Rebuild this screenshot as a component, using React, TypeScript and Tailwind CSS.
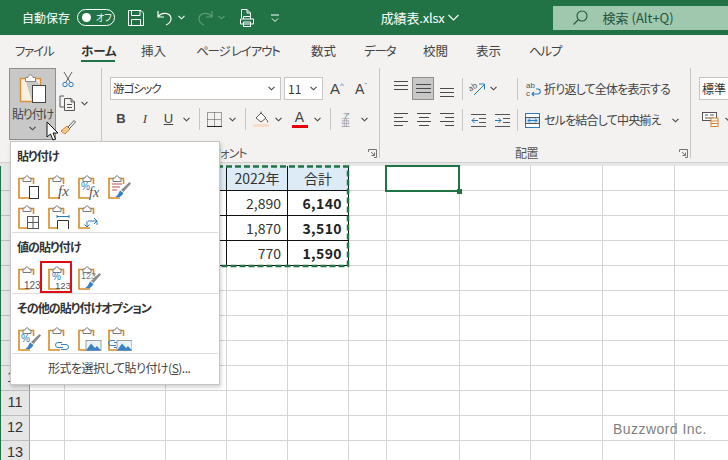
import React from "react";

const Chev = ({ c = "#444" }: { c?: string }) => (
  <svg width="7" height="5" viewBox="0 0 7 5" className="shrink-0"><path d="M0.5 0.8 L3.5 3.8 L6.5 0.8" fill="none" stroke={c} strokeWidth="1.1" /></svg>
);
const Sep = () => <div className="w-px h-[22px] bg-[#c8c6c4] shrink-0" />;
const Launcher = () => (
  <svg width="9" height="9" viewBox="0 0 9 9" className="shrink-0"><path d="M0.5 3 V0.5 H8.5 V8.5 H6 M3 3 L6.5 6.5 M6.5 3.5 V6.5 H3.5" fill="none" stroke="#666" strokeWidth="0.9" /></svg>
);
const HL = ({ ys, xs }: { ys: number[]; xs: [number, number][] }) => (
  <svg width="15" height="16" viewBox="0 0 15 16">
    {ys.map((y, i) => (
      <path key={i} d={`M${xs[i][0]} ${y}.5 H${xs[i][1]}`} stroke="#4a4a4a" strokeWidth="1" />
    ))}
  </svg>
);

/* paste menu clipboard base */
const PI = ({ children }: { children?: React.ReactNode }) => (
  <svg width="24" height="25" viewBox="0 0 24 25" className="shrink-0">
    <path d="M5 3.5 H1 V23 H12 M13 3.5 H15.5 V9" fill="none" stroke="#d58d26" strokeWidth="1.6" />
    <path d="M5 6.5 V3 H7 C7.3 0.2 10.7 0.2 11 3 H13 V6.5 Z" fill="#fff" stroke="#7a7a7a" strokeWidth="1" />
    {children}
  </svg>
);
const Doc = () => <rect x="11.5" y="11.5" width="9" height="12" fill="#fff" stroke="#333" strokeWidth="1" />;
const Brush = () => (
  <g>
    <path d="M13 15 L21.5 7 L23 8.5 L15.5 17 Z" fill="#8a8a8a" />
    <path d="M7 21.5 C10 21 10.5 18 12 15.5 L15.5 18 C14 21 11 23.5 7 21.5 Z" fill="#3a82c4" />
  </g>
);
const BT = ({ x, y, s, c, t, it, f }: { x: number; y: number; s: number; c: string; t: string; it?: boolean; f?: string }) => (
  <text x={x} y={y} fontSize={s} fill={c} fontStyle={it ? "italic" : "normal"} fontFamily={f || "'Liberation Sans',sans-serif"}>{t}</text>
);
const Pic = ({ x }: { x: number }) => (
  <g>
    <rect x={x} y="13.5" width="15" height="10" fill="#eaf3fa" stroke="#888" strokeWidth="0.8" />
    <path d={`M${x} 23.5 L${x + 5} 16.5 L${x + 9} 21 L${x + 11} 19 L${x + 15} 23.5 Z`} fill="#3a82c4" />
  </g>
);
const Link = ({ x = 9, y = 15 }: { x?: number; y?: number }) => (
  <g fill="none" stroke="#3a82c4" strokeWidth="1">
    <path d={`M${x + 8} ${y + 1.5} H${x + 4} a2.5 2.5 0 0 0 0 5 H${x + 9}`} />
    <path d={`M${x + 7} ${y + 3.5} H${x + 12} a2.5 2.5 0 0 1 0 5 H${x + 7}`} />
  </g>
);

const MenuHead = ({ children, cls }: { children: React.ReactNode; cls: string }) => (
  <div className={`pl-[6px] font-bold text-[12px] tracking-[-0.9px] leading-[16px] text-[#333] ${cls}`}>{children}</div>
);
const MenuSep = ({ cls }: { cls: string }) => <div className={`mx-px h-px bg-[#dcdcdc] ${cls}`} />;

const cols = [0, 1, 2, 3, 4, 5, 6, 7, 8, 9, 10, 11];
const rows = [2, 3, 4, 5, 6, 7, 8, 9, 10, 11, 12, 13];
const table: Record<string, [string, boolean]> = {
  "2-4": ["2022年", false], "2-5": ["合計", false],
  "3-4": ["2,890", false], "3-5": ["6,140", true],
  "4-4": ["1,870", false], "4-5": ["3,510", true],
  "5-4": ["770", false], "5-5": ["1,590", true],
};

export default function App() {
  return (
    <div className="relative w-[728px] h-[460px] overflow-hidden bg-white text-[#444] font-['Noto_Sans_CJK_JP',sans-serif] [font-feature-settings:'palt'] text-[12px]">
      {/* Title bar */}
      <div className="h-[35px] bg-[#217346] flex items-center text-white">
        <span className="ml-[22px] w-[55px] text-[12px] whitespace-nowrap">自動保存</span>
        <div className="w-[38px] h-[17px] rounded-full border border-white flex items-center pl-[4px] shrink-0">
          <span className="w-[9px] h-[9px] rounded-full bg-white" />
          <span className="ml-[5px] text-[9px] leading-none">オフ</span>
        </div>
        <svg className="ml-[13px] shrink-0" width="16" height="16" viewBox="0 0 16 16" fill="none" stroke="#fff" strokeWidth="1"><path d="M0.5 0.5 H13 L15.5 3 V15.5 H0.5 Z M3.5 0.5 V5.5 H12 V0.5 M3.5 15.5 V9.5 H12.5 V15.5" /></svg>
        <svg className="ml-[13px] shrink-0" width="16" height="16" viewBox="0 0 16 16" fill="none" stroke="#fff" strokeWidth="1.2"><path d="M1 1 V7 H7 M1 7 C4 2 13 2 14 8 C14.5 11 12 14 9 15" /></svg>
        <span className="ml-[5px] flex"><Chev c="#fff" /></span>
        <svg className="ml-[12px] shrink-0" width="16" height="16" viewBox="0 0 16 16" fill="none" stroke="#5f9d7c" strokeWidth="1.2"><path d="M15 1 V7 H9 M15 7 C12 2 3 2 2 8 C1.5 11 4 14 7 15" /></svg>
        <span className="ml-[5px] flex"><Chev c="#5f9d7c" /></span>
        <svg className="ml-[14px] shrink-0" width="16" height="18" viewBox="0 0 16 18" fill="none" stroke="#fff" strokeWidth="1"><path d="M2.5 9 V0.5 H8 L11.5 4 V7 M8 0.5 V4 H11.5 M4.5 10 V7.5 H11.5 V10 M1.5 10 H14.5 V15 H1.5 Z M4.5 13 H11.5 V17.5 H4.5 Z" /></svg>
        <svg className="ml-[16px] shrink-0" width="8" height="8" viewBox="0 0 8 8" fill="none" stroke="#fff" strokeWidth="1"><path d="M0 1 H8 M1 4.5 L4 7.5 L7 4.5" /></svg>
        <span className="ml-[102px] w-[67px] text-[13px] tracking-[-0.2px] whitespace-nowrap">成績表.xlsx</span>
        <svg className="shrink-0" width="11" height="7" viewBox="0 0 11 7" fill="none" stroke="#fff" strokeWidth="1.1"><path d="M0.5 1 L5.5 6 L10.5 1" /></svg>
        <div className="ml-[94px] w-[176px] h-[24px] bg-[#a0c8ae] flex items-center text-[#24543c]">
          <svg className="ml-[20px] shrink-0" width="15" height="15" viewBox="0 0 15 15" fill="none" stroke="#24543c" strokeWidth="1.1"><circle cx="9" cy="6" r="5" /><path d="M5.5 9.5 L0.5 14.5" /></svg>
          <span className="ml-[15px] text-[13px] whitespace-nowrap">検索 (Alt+Q)</span>
        </div>
      </div>

      {/* Tabs */}
      <div className="h-[30px] bg-[#f3f2f1] flex pl-[15px] pt-[6px] text-[12.5px] text-[#444] leading-[20px]">
        <span className="w-[66px] tracking-[-1.2px]">ファイル</span>
        <span className="w-[60px] relative font-bold text-[#333]">
          ホーム
          <span className="absolute left-0 top-[19px] w-[34px] h-[2px] bg-[#217346]" />
        </span>
        <span className="w-[55px]">挿入</span>
        <span className="w-[115px] whitespace-nowrap tracking-[-1.2px]">ページ レイアウト</span>
        <span className="w-[53px]">数式</span>
        <span className="w-[59px] tracking-[-1.2px]">データ</span>
        <span className="w-[53px]">校閲</span>
        <span className="w-[53px]">表示</span>
        <span className="tracking-[-1.2px]">ヘルプ</span>
      </div>

      {/* Ribbon */}
      <div className="h-[98px] bg-[#f3f2f1] flex pt-[3px] border-b border-[#d2d0ce]">
        {/* Clipboard */}
        <div className="w-[102px] h-[90px] border-r border-[#c8c6c4] pl-[9px] flex shrink-0">
          <div className="w-[47px] h-[72px] bg-[#c8c8c8] border border-[#8f8f8f] flex flex-col items-center shrink-0">
            <svg className="mt-[4px]" width="28" height="31" viewBox="0 0 28 31">
              <path d="M6 5.5 H1.5 V28.5 H13 M16 5.5 H21.5 V13" fill="#fbeedb" stroke="#d8953c" strokeWidth="1.5" />
              <path d="M6.5 8.5 V4.5 H9 C9.3 1 13.7 1 14 4.5 H16.5 V8.5 Z" fill="#fff" stroke="#8a8a8a" strokeWidth="1" />
              <rect x="13.5" y="12.5" width="13" height="17" fill="#fff" stroke="#444" strokeWidth="1" />
            </svg>
            <span className="mt-[2px] text-[12px] leading-[16px] whitespace-nowrap tracking-[-1.2px] text-[#444]">貼り付け</span>
            <span className="mt-[4px] flex"><Chev /></span>
          </div>
          <div className="ml-[3px] flex flex-col shrink-0 pt-[3px]">
            <svg width="12" height="17" viewBox="0 0 12 17" className="ml-[3px]" fill="none" strokeWidth="1"><path d="M2 1 L8 11 M10 1 L4 11" stroke="#666" /><circle cx="3" cy="13.5" r="2.2" stroke="#2a7cc0" /><circle cx="9" cy="13.5" r="2.2" stroke="#2a7cc0" /></svg>
            <div className="flex items-center mt-[7px]">
              <svg width="17" height="16" viewBox="0 0 17 16" fill="none" stroke="#555" strokeWidth="1"><path d="M5 1 H1 V12 H5" /><path d="M5.5 3.5 H12 L15.5 7 V15.5 H5.5 Z M12 3.5 V7 H15.5 M8 9.5 H13 M8 12.5 H13" /></svg>
              <span className="ml-[5px] flex"><Chev /></span>
            </div>
            <svg className="mt-[8px] ml-px" width="16" height="16" viewBox="0 0 16 16"><path d="M1 12 L7 7 L10 10 L5 15 Z" fill="#f6c88c" stroke="#d8822c" strokeWidth="1" /><path d="M8 8 L14 1.5 L15.5 3 L9.5 9.5 Z" fill="#fff" stroke="#555" strokeWidth="1" /></svg>
          </div>
        </div>

        {/* Font */}
        <div className="w-[278px] h-[90px] border-r border-[#c8c6c4] flex flex-col shrink-0 pt-[9px]">
          <div className="flex items-center h-[23px]">
            <div className="ml-[8px] w-[171px] h-[23px] bg-white border border-[#c6c6c6] flex items-center pl-[2px] pr-[5px] justify-between shrink-0 text-[11.5px] tracking-[-0.9px] text-[#333]">
              <span>游ゴシック</span><Chev />
            </div>
            <div className="ml-[3px] w-[39px] h-[23px] bg-white border border-[#c6c6c6] flex items-center pl-[3px] pr-[5px] justify-between shrink-0 text-[12px] text-[#333]">
              <span>11</span><Chev />
            </div>
            <span className="ml-[7px] w-[25px] text-[15px] leading-none whitespace-nowrap text-[#444] font-['Liberation_Sans',sans-serif]">A<span className="text-[8px] align-[6px] text-[#2a7cc0]">^</span></span>
            <span className="w-[20px] text-[14px] leading-none whitespace-nowrap text-[#444] font-['Liberation_Sans',sans-serif]">A<span className="text-[8px] align-[6px] text-[#2a7cc0]">ˇ</span></span>
          </div>
          <div className="flex items-center h-[23px] mt-[8px]">
            <span className="ml-[7px] w-[24px] text-center font-bold text-[13px] text-[#444] font-['Liberation_Sans',sans-serif]">B</span>
            <span className="w-[24px] text-center italic text-[13px] text-[#444] font-['Liberation_Serif',serif]">I</span>
            <span className="w-[23px] text-center underline text-[13px] text-[#444] font-['Liberation_Sans',sans-serif]">U</span>
            <span className="w-[13px] flex justify-center"><Chev /></span>
            <span className="ml-[6px] flex"><Sep /></span>
            <span className="w-[29px] flex justify-center">
              <svg width="15" height="15" viewBox="0 0 15 15" fill="none"><path d="M0.5 0.5 H14.5 V14.5 H0.5 Z M7.5 0.5 V14.5 M0.5 7.5 H14.5" stroke="#444" strokeWidth="1" strokeDasharray="1 1" /><path d="M0 14.5 H15" stroke="#222" strokeWidth="1" /></svg>
            </span>
            <span className="w-[6px] flex justify-center"><Chev /></span>
            <span className="ml-[10px] flex"><Sep /></span>
            <span className="w-[29px] flex justify-center">
              <svg width="16" height="16" viewBox="0 0 16 16"><path d="M3 7 L8 2 L13 7 L8 11 Z" fill="#fff" stroke="#555" strokeWidth="1" /><path d="M8 2 L8 0.5 M13 8 C15 10 15 11 14 11.5" stroke="#555" fill="none" /><rect x="0" y="13" width="16" height="3" fill="#f8ddc8" /></svg>
            </span>
            <span className="w-[6px] flex justify-center"><Chev /></span>
            <span className="ml-[4px] w-[29px] flex flex-col items-center">
              <span className="text-[14px] leading-[13px] text-[#444] font-['Liberation_Sans',sans-serif]">A</span>
              <span className="w-[16px] h-[3px] mt-px bg-[#e8000b]" />
            </span>
            <span className="w-[6px] flex justify-center"><Chev /></span>
            <span className="ml-[10px] flex"><Sep /></span>
            <span className="w-[30px] flex justify-center">
              <svg width="11" height="16" viewBox="0 0 11 16"><text x="2" y="6.5" fontSize="7" fill="#777">ア</text><text x="0" y="15" fontSize="9" fill="#999">亜</text></svg>
            </span>
            <span className="w-[6px] flex justify-center"><Chev /></span>
          </div>
          <div className="mt-[15px] h-[16px] flex items-center pl-[109px] pr-[2px] justify-between text-[12px] tracking-[-0.9px] text-[#555]">
            <span>フォント</span>
            <Launcher />
          </div>
        </div>

        {/* Alignment */}
        <div className="w-[311px] h-[90px] border-r border-[#c8c6c4] flex flex-col shrink-0 pt-[9px]">
          <div className="flex items-center h-[23px]">
            <span className="ml-[8px] w-[24px] flex justify-center"><HL ys={[0, 4, 8]} xs={[[1, 15], [1, 15], [1, 15]]} /></span>
            <span className="w-[22px] h-[23px] bg-[#c8c8c8] border border-[#8f8f8f] flex items-center justify-center"><HL ys={[3, 7, 11]} xs={[[0, 15], [0, 15], [0, 15]]} /></span>
            <span className="w-[26px] flex justify-center"><HL ys={[7, 11, 15]} xs={[[0, 14], [0, 14], [0, 14]]} /></span>
            <span className="ml-[2px] flex"><Sep /></span>
            <span className="ml-[5px] w-[20px] flex justify-center">
              <svg width="18" height="16" viewBox="0 0 18 16" fill="none" stroke="#666" strokeWidth="1"><text x="0" y="9" fontSize="8" fill="#555" stroke="none" transform="rotate(-35 4 8)">ab</text><path d="M5 14 L15 4 M10 3 H15.5 V8.5" stroke="#2a7cc0" /></svg>
            </span>
            <span className="w-[10px] flex justify-center"><Chev /></span>
            <span className="ml-[19px] flex"><Sep /></span>
            <svg className="ml-[8px] shrink-0" width="16" height="16" viewBox="0 0 16 16" fill="none"><text x="0" y="7" fontSize="8" fill="#555" stroke="none" fontFamily="'Liberation Sans',sans-serif">ab</text><text x="0" y="15" fontSize="8" fill="#555" stroke="none" fontFamily="'Liberation Sans',sans-serif">c</text><path d="M6 13 H12 C15 13 15 8 12 8 H10 M8 11 L6 13 L8 15" stroke="#2a7cc0" strokeWidth="1.1" /></svg>
            <span className="ml-[2px] pt-[1px] text-[12px] tracking-[-0.8px] whitespace-nowrap text-[#444]">折り返して全体を表示する</span>
          </div>
          <div className="flex items-center h-[23px] mt-[9px]">
            <span className="ml-[8px] w-[24px] flex justify-center"><HL ys={[1, 5, 9, 13]} xs={[[1, 15], [1, 10], [1, 15], [1, 10]]} /></span>
            <span className="w-[22px] flex justify-center"><HL ys={[1, 5, 9, 13]} xs={[[1, 15], [3, 13], [1, 15], [3, 13]]} /></span>
            <span className="w-[26px] flex justify-center"><HL ys={[1, 5, 9, 13]} xs={[[0, 14], [5, 14], [0, 14], [5, 14]]} /></span>
            <span className="ml-[2px] flex"><Sep /></span>
            <span className="w-[30px] flex justify-center">
              <svg width="15" height="14" viewBox="0 0 15 14" fill="none" strokeWidth="1"><path d="M0 1.5 H15 M8 5.5 H15 M8 9.5 H15 M0 13.5 H15" stroke="#555" /><path d="M7 7.5 H1 M3.5 5 L1 7.5 L3.5 10" stroke="#2a7cc0" /></svg>
            </span>
            <span className="w-[18px] flex justify-center">
              <svg width="15" height="14" viewBox="0 0 15 14" fill="none" strokeWidth="1"><path d="M0 1.5 H15 M8 5.5 H15 M8 9.5 H15 M0 13.5 H15" stroke="#555" /><path d="M0 7.5 H6 M3.5 5 L6 7.5 L3.5 10" stroke="#2a7cc0" /></svg>
            </span>
            <span className="ml-[6px] flex"><Sep /></span>
            <svg className="ml-[7px] shrink-0" width="15" height="15" viewBox="0 0 15 15" fill="none"><rect x="0.5" y="0.5" width="14" height="14" fill="#fff" stroke="#2a7cc0" /><rect x="0.5" y="4.5" width="14" height="6" fill="#cfe4f5" stroke="#555" /><path d="M3 7.5 H12 M5 5.5 L3 7.5 L5 9.5 M10 5.5 L12 7.5 L10 9.5" stroke="#2a7cc0" /></svg>
            <span className="ml-[4px] w-[126px] text-[12px] tracking-[-0.8px] whitespace-nowrap text-[#444]">セルを結合して中央揃え</span>
            <span className="ml-[2px] flex"><Chev /></span>
          </div>
          <div className="mt-[14px] h-[16px] flex items-center pr-[2px] text-[12px] tracking-[-0.5px] text-[#555]">
            <span className="ml-[135px]">配置</span>
            <span className="ml-auto flex"><Launcher /></span>
          </div>
        </div>

        {/* Number */}
        <div className="flex flex-col shrink-0 pt-[9px]">
          <div className="flex items-center h-[23px]">
            <div className="ml-[8px] w-[60px] h-[23px] bg-white border border-[#c6c6c6] flex items-center pl-[2px] text-[12px] text-[#333]">標準</div>
          </div>
          <div className="flex items-center h-[23px] mt-[8px]">
            <svg className="ml-[11px] shrink-0" width="17" height="15" viewBox="0 0 17 15"><rect x="0.5" y="0.5" width="14" height="8" fill="#fff" stroke="#555" /><path d="M3 3 H6 M8 3 H12 M3 6 H12" stroke="#555" /><rect x="9" y="6" width="7" height="8.5" fill="#fff" stroke="#d8822c" /><path d="M9 9 H16 M9 11.5 H16" stroke="#d8822c" /></svg>
            <span className="ml-[6px] flex"><Chev /></span>
          </div>
        </div>
      </div>

      {/* Sheet */}
      <div className="h-[3px] bg-[#e6e6e6]" />
      <div className="border-l border-[#217346] grid grid-cols-[29px_35px_101px_61px_61px_61px_38px_73px_71px_72px_72px_54px] auto-rows-[25px] text-[#333]">
        {rows.map((r) =>
          cols.map((c) => {
            if (c === 0)
              return (
                <div key={`${r}-${c}`} className="bg-[#e6e6e6] border-r border-b border-r-[#9b9b9b] border-b-[#bdbdbd] flex items-center justify-center text-[14.5px] text-[#333] font-['Liberation_Sans',sans-serif]">{r}</div>
              );
            const cell = table[`${r}-${c}`];
            const inTable = r <= 5 && (c === 3 || c === 4 || c === 5);
            const head = r === 2 && inTable;
            return (
              <div
                key={`${r}-${c}`}
                className={`border-r border-b flex items-center px-[6px] text-[14px] ${inTable ? "border-r-[#111] border-b-[#111]" : "border-r-[#d4d4d4] border-b-[#d4d4d4]"} ${head ? "bg-[#ddebf7] justify-center" : "justify-end"} ${cell && cell[1] ? "font-bold text-[#222] tracking-[0.4px]" : ""}`}
              >
                {cell ? cell[0] : ""}
              </div>
            );
          })
        )}
      </div>

      {/* Marching ants */}
      <svg className="absolute left-0 top-[160px]" width="355" height="112" viewBox="0 0 355 112" fill="none">
        <path d="M100 6.5 H348 V106 H100" stroke="#217346" strokeWidth="2.5" strokeDasharray="6 3" />
      </svg>

      {/* Selected cell */}
      <div className="absolute left-[385px] top-[165px] w-[75px] h-[27px] border-2 border-[#217346]">
        <span className="absolute right-[-4px] bottom-[-4px] w-[5px] h-[5px] bg-[#217346]" />
      </div>

      {/* Paste menu */}
      <div className="absolute left-[10px] top-[141px] w-[210px] h-[244px] bg-white border border-[#c6c6c6] shadow-[1px_2px_4px_rgba(0,0,0,0.2)]">
        <MenuHead cls="mt-[6px]">貼り付け</MenuHead>
        <div className="flex gap-[6px] pl-[7px] mt-[11px]">
          <PI><Doc /></PI>
          <PI><BT x={10} y={21} s={15} c="#555" t="fx" it f="'Liberation Serif',serif" /></PI>
          <PI><BT x={3} y={15} s={10} c="#2a7cc0" t="%" /><BT x={11} y={22} s={14} c="#555" t="fx" it f="'Liberation Serif',serif" /></PI>
          <PI>
            <path d="M4 9 H14 M4 12 H12 M4 15 H9" stroke="#c0504d" strokeWidth="1" />
            <Brush />
          </PI>
        </div>
        <div className="flex gap-[6px] pl-[7px] mt-[5px]">
          <PI><rect x="9.5" y="11.5" width="11" height="12" fill="#fff" stroke="#555" /><path d="M15 11.5 V23.5 M9.5 17.5 H20.5" stroke="#555" /></PI>
          <PI><path d="M9 11.5 H21 M9 10 V13 M21 10 V13" stroke="#2a7cc0" fill="none" /><path d="M9.5 24 V15.5 H20.5 V24" fill="#fff" stroke="#333" /></PI>
          <PI><path d="M10 16 H19 V20 M16 13 L19 16 L16 19 M9 16 V22 M6.5 19.5 L9 22 L11.5 19.5" fill="none" stroke="#2a7cc0" /></PI>
        </div>
        <MenuSep cls="mt-[2px]" />
        <MenuHead cls="mt-[6px]">値の貼り付け</MenuHead>
        <div className="flex gap-[6px] pl-[7px] mt-[11px]">
          <PI><BT x={6} y={23} s={10} c="#555" t="123" /></PI>
          <div className="relative flex">
            <PI><BT x={4} y={14} s={10} c="#2a7cc0" t="%" /><BT x={7} y={23} s={9.5} c="#555" t="123" /></PI>
            <span className="absolute left-[-8px] top-[-5px] w-[32px] h-[32px] border-2 border-[#e00b14]" />
          </div>
          <PI><BT x={3} y={13} s={9} c="#777" t="123" /><Brush /></PI>
        </div>
        <MenuSep cls="mt-[2px]" />
        <MenuHead cls="mt-[6px]">その他の貼り付けオプション</MenuHead>
        <div className="flex gap-[6px] pl-[7px] mt-[11px]">
          <PI><BT x={3} y={15} s={10} c="#2a7cc0" t="%" /><Brush /></PI>
          <PI><Link x={6} y={14} /></PI>
          <PI><Pic x={8} /></PI>
          <PI><Link x={-1} y={12} /><Pic x={9} /></PI>
        </div>
        <MenuSep cls="mt-[1px]" />
        <div className="pl-[37px] mt-[6px] text-[12px] tracking-[-0.5px] leading-[16px] text-[#444] whitespace-nowrap">形式を選択して貼り付け(<span className="underline">S</span>)...</div>
      </div>

      {/* Cursor */}
      <svg className="absolute left-[46px] top-[121px]" width="13" height="20" viewBox="0 0 13 20">
        <path d="M1 1 V16 L4.5 13 L7 19 L9.5 18 L7 12 H12 Z" fill="#fff" stroke="#111" strokeWidth="1" />
      </svg>

      {/* Watermark */}
      <div className="absolute left-[613px] top-[419px] text-[14px] tracking-[0.45px] text-[#7f7f7f] font-['Liberation_Sans',sans-serif] [font-feature-settings:normal]">Buzzword Inc.</div>
    </div>
  );
}
